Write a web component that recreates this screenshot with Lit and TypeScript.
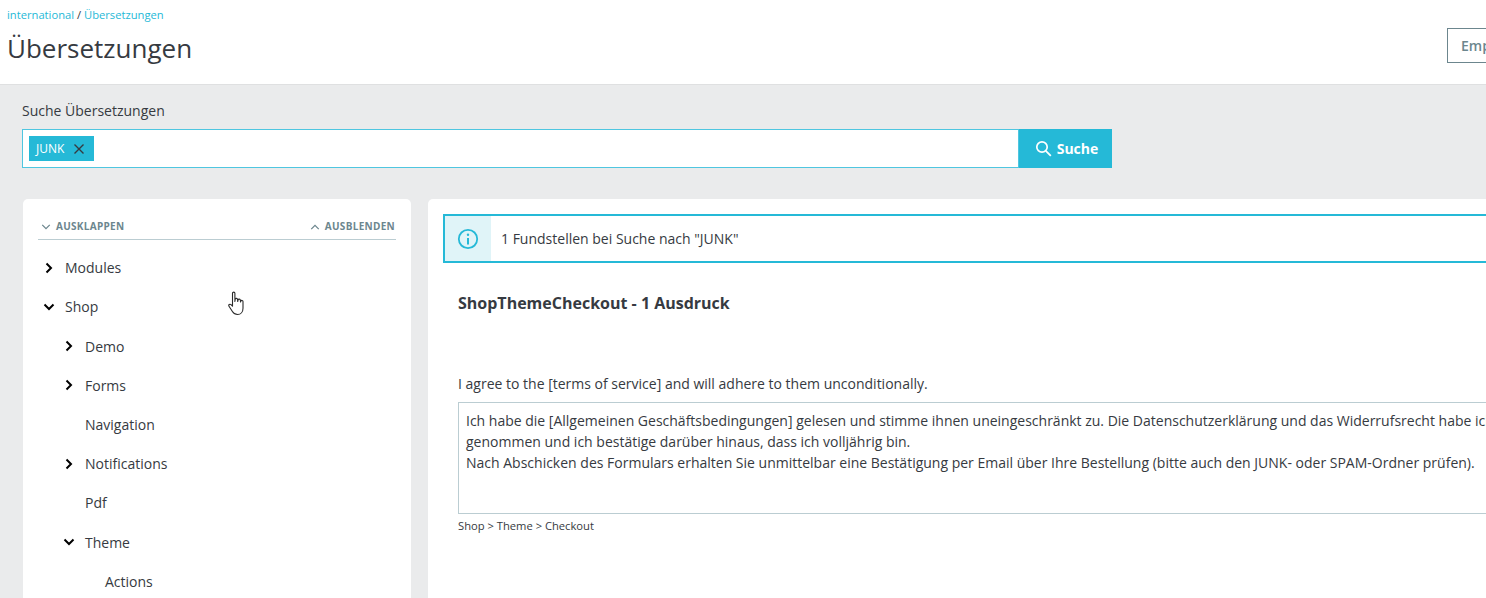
import { LitElement, css, html, svg } from "lit";
import { customElement } from "lit/decorators.js";

type TreeItem = { label: string; depth: number; state?: "open" | "closed" };

const TREE: TreeItem[] = [
  { label: "Modules", depth: 0, state: "closed" },
  { label: "Shop", depth: 0, state: "open" },
  { label: "Demo", depth: 1, state: "closed" },
  { label: "Forms", depth: 1, state: "closed" },
  { label: "Navigation", depth: 1 },
  { label: "Notifications", depth: 1, state: "closed" },
  { label: "Pdf", depth: 1 },
  { label: "Theme", depth: 1, state: "open" },
  { label: "Actions", depth: 2 },
];

const chevron = (dir: "right" | "down" | "up", cls: string) => {
  const d = dir === "right" ? "M3.5 1.5 8 6 3.5 10.5" : dir === "down" ? "M1.5 3.5 6 8 10.5 3.5" : "M1.5 8.5 6 4 10.5 8.5";
  return html`<svg class=${cls} viewBox="0 0 12 12">${svg`<path d=${d} fill="none" stroke="currentColor" stroke-width="2" />`}</svg>`;
};

@customElement("app-root")
export class AppRoot extends LitElement {
  static styles = css`
    :host {
      display: block;
      position: relative;
      width: 1486px;
      height: 598px;
      overflow: hidden;
      background: #eaebec;
      color: #363a41;
      font-family: "Open Sans", "Noto Sans", sans-serif;
      font-size: 14px;
    }

    .head {
      box-sizing: border-box;
      position: relative;
      height: 85px;
      padding: 7px 0 0 7px;
      background: #fff;
      border-bottom: 1px solid #dfe0e1;
    }

    .crumbs {
      font-size: 11.2px;
      line-height: 15px;
      color: #363a41;
    }

    .crumbs a {
      color: #25b9d7;
    }

    h1 {
      margin: 8px 0 0;
      font-size: 26px;
      font-weight: 400;
      line-height: 36px;
    }

    .head button {
      position: absolute;
      top: 28px;
      left: 1447px;
      box-sizing: border-box;
      width: 100px;
      height: 35px;
      padding: 0 0 0 13px;
      text-align: left;
      background: #fff;
      border: 1px solid #6c868e;
      color: #6c868e;
      font: 600 14px "Open Sans", sans-serif;
    }

    .search {
      padding: 16px 0 0 22px;
    }

    .search label {
      display: block;
      line-height: 19px;
      margin-bottom: 9px;
    }

    .search-row {
      display: flex;
      width: 1090px;
      height: 39px;
    }

    .field {
      flex: 1;
      box-sizing: border-box;
      display: flex;
      align-items: center;
      padding-left: 6px;
      background: #fff;
      border: 1px solid #4fc6e0;
    }

    .chip {
      display: flex;
      align-items: center;
      box-sizing: border-box;
      width: 65px;
      height: 25px;
      padding-left: 7px;
      gap: 9px;
      background: #25b9d7;
      color: #fff;
      font-size: 12px;
    }

    .chip svg {
      width: 12px;
      height: 12px;
      color: #363a41;
    }

    .go {
      display: flex;
      align-items: center;
      justify-content: center;
      gap: 5px;
      width: 93px;
      border: 0;
      padding: 0 0 0 2px;
      background: #25b9d7;
      color: #fff;
      font: 700 14px "Open Sans", sans-serif;
    }

    .go svg {
      width: 17px;
      height: 17px;
    }

    .columns {
      display: grid;
      grid-template-columns: 388px 1300px;
      gap: 17px;
      margin: 31px 0 0 23px;
    }

    .card {
      height: 600px;
      background: #fff;
      border-radius: 5px;
      box-sizing: border-box;
    }

    .tools {
      display: flex;
      justify-content: space-between;
      margin: 0 15px;
      padding: 21px 1px 6px 3px;
      border-bottom: 1px solid #bbcdd2;
      color: #6c868e;
      font-size: 10px;
      font-weight: 700;
      letter-spacing: 0.3px;
      line-height: 13px;
    }

    .tools span {
      display: flex;
      align-items: center;
      gap: 5px;
    }

    .small {
      width: 10px;
      height: 10px;
    }

    .small path {
      stroke-width: 1.5;
    }

    .tree {
      padding-top: 8.1px;
    }

    .node {
      display: flex;
      align-items: center;
      height: 39.2px;
      line-height: 19px;
      color: #363a41;
    }

    .node .slot {
      display: flex;
      width: 42px;
      flex: none;
      justify-content: flex-end;
      padding-right: 10px;
      box-sizing: border-box;
    }

    .node svg {
      width: 12px;
      height: 12px;
      color: #000;
    }

    .d1 { padding-left: 20px; }
    .d2 { padding-left: 40px; }

    .main {
      padding: 15px 0 0 15px;
    }

    .info {
      display: flex;
      align-items: center;
      box-sizing: border-box;
      height: 49px;
      border: 2px solid #25b9d7;
    }

    .info .mark {
      display: flex;
      align-items: center;
      justify-content: center;
      width: 46px;
      height: 100%;
      background: #e0f4f8;
      color: #25b9d7;
    }

    .info svg {
      width: 22px;
      height: 22px;
    }

    .info p {
      margin: 0 0 0 10px;
    }

    h2 {
      margin: 29px 0 0 15px;
      font-size: 16px;
      font-weight: 700;
      line-height: 22px;
    }

    .source {
      margin: 60px 0 0 15px;
      line-height: 19px;
    }

    .text {
      box-sizing: border-box;
      height: 112px;
      margin: 9px 0 0 15px;
      padding: 7px;
      border: 1px solid #bbcdd2;
      line-height: 21px;
      white-space: nowrap;
    }

    .path {
      margin: 4px 0 0 15px;
      font-size: 11.2px;
      line-height: 15px;
    }

    .cursor {
      position: absolute;
      left: 228px;
      top: 291px;
      width: 19px;
      height: 26px;
    }
  `;

  render() {
    return html`
      <header class="head">
        <div class="crumbs"><a>international</a> / <a>Übersetzungen</a></div>
        <h1>Übersetzungen</h1>
        <button>Empfehlen</button>
      </header>

      <section class="search">
        <label>Suche Übersetzungen</label>
        <div class="search-row">
          <div class="field">
            <span class="chip">JUNK
              <svg viewBox="0 0 12 12"><path d="M1.5 1.5l9 9M10.5 1.5l-9 9" fill="none" stroke="currentColor" stroke-width="1.4" /></svg>
            </span>
          </div>
          <button class="go">
            <svg viewBox="0 0 17 17"><circle cx="7" cy="7" r="5.2" fill="none" stroke="#fff" stroke-width="1.7" /><path d="M10.8 10.8 15.8 15.8" stroke="#fff" stroke-width="1.8" /></svg>
            Suche
          </button>
        </div>
      </section>

      <div class="columns">
        <aside class="card">
          <div class="tools">
            <span>${chevron("down", "small")}AUSKLAPPEN</span>
            <span>${chevron("up", "small")}AUSBLENDEN</span>
          </div>
          <div class="tree">
            ${TREE.map(
              (item) => html`
                <div class="node d${item.depth}">
                  <span class="slot">${item.state ? chevron(item.state === "open" ? "down" : "right", "") : ""}</span>
                  ${item.label}
                </div>
              `
            )}
          </div>
        </aside>

        <main class="card main">
          <div class="info">
            <span class="mark">
              <svg viewBox="0 0 22 22">
                <circle cx="11" cy="11" r="9.2" fill="none" stroke="currentColor" stroke-width="1.8" />
                <path d="M11 10v6.5" stroke="currentColor" stroke-width="2" />
                <circle cx="11" cy="6.8" r="1.2" fill="currentColor" />
              </svg>
            </span>
            <p>1 Fundstellen bei Suche nach "JUNK"</p>
          </div>
          <h2>ShopThemeCheckout - 1 Ausdruck</h2>
          <div class="source">I agree to the [terms of service] and will adhere to them unconditionally.</div>
          <div class="text">
            Ich habe die [Allgemeinen Geschäftsbedingungen] gelesen und stimme ihnen uneingeschränkt zu. Die Datenschutzerklärung und das Widerrufsrecht habe ich zur Kenntnis<br />
            genommen und ich bestätige darüber hinaus, dass ich volljährig bin.<br />
            Nach Abschicken des Formulars erhalten Sie unmittelbar eine Bestätigung per Email über Ihre Bestellung (bitte auch den JUNK- oder SPAM-Ordner prüfen).
          </div>
          <div class="path">Shop &gt; Theme &gt; Checkout</div>
        </main>
      </div>

      <svg class="cursor" viewBox="0 0 19 26">
        <path
          d="M4.5 2.2c0-1.5 2.4-1.5 2.4 0v8.3l.3-2.2c.2-1.3 2.3-1.2 2.4.2l.1 2 .4-1.6c.3-1.2 2.2-1 2.3.3l.1 1.8.4-1c.4-1 2.1-.7 2.1.6v6.6c0 3.6-2.2 6.3-5.4 6.3-2.5 0-4-1.1-5.2-3L1 15.2c-.8-1.3.8-2.6 2-1.6l1.5 1.6z"
          fill="#fff"
          stroke="#2a2a2a"
          stroke-width="1.1"
          stroke-linejoin="round"
        />
      </svg>
    `;
  }
}
